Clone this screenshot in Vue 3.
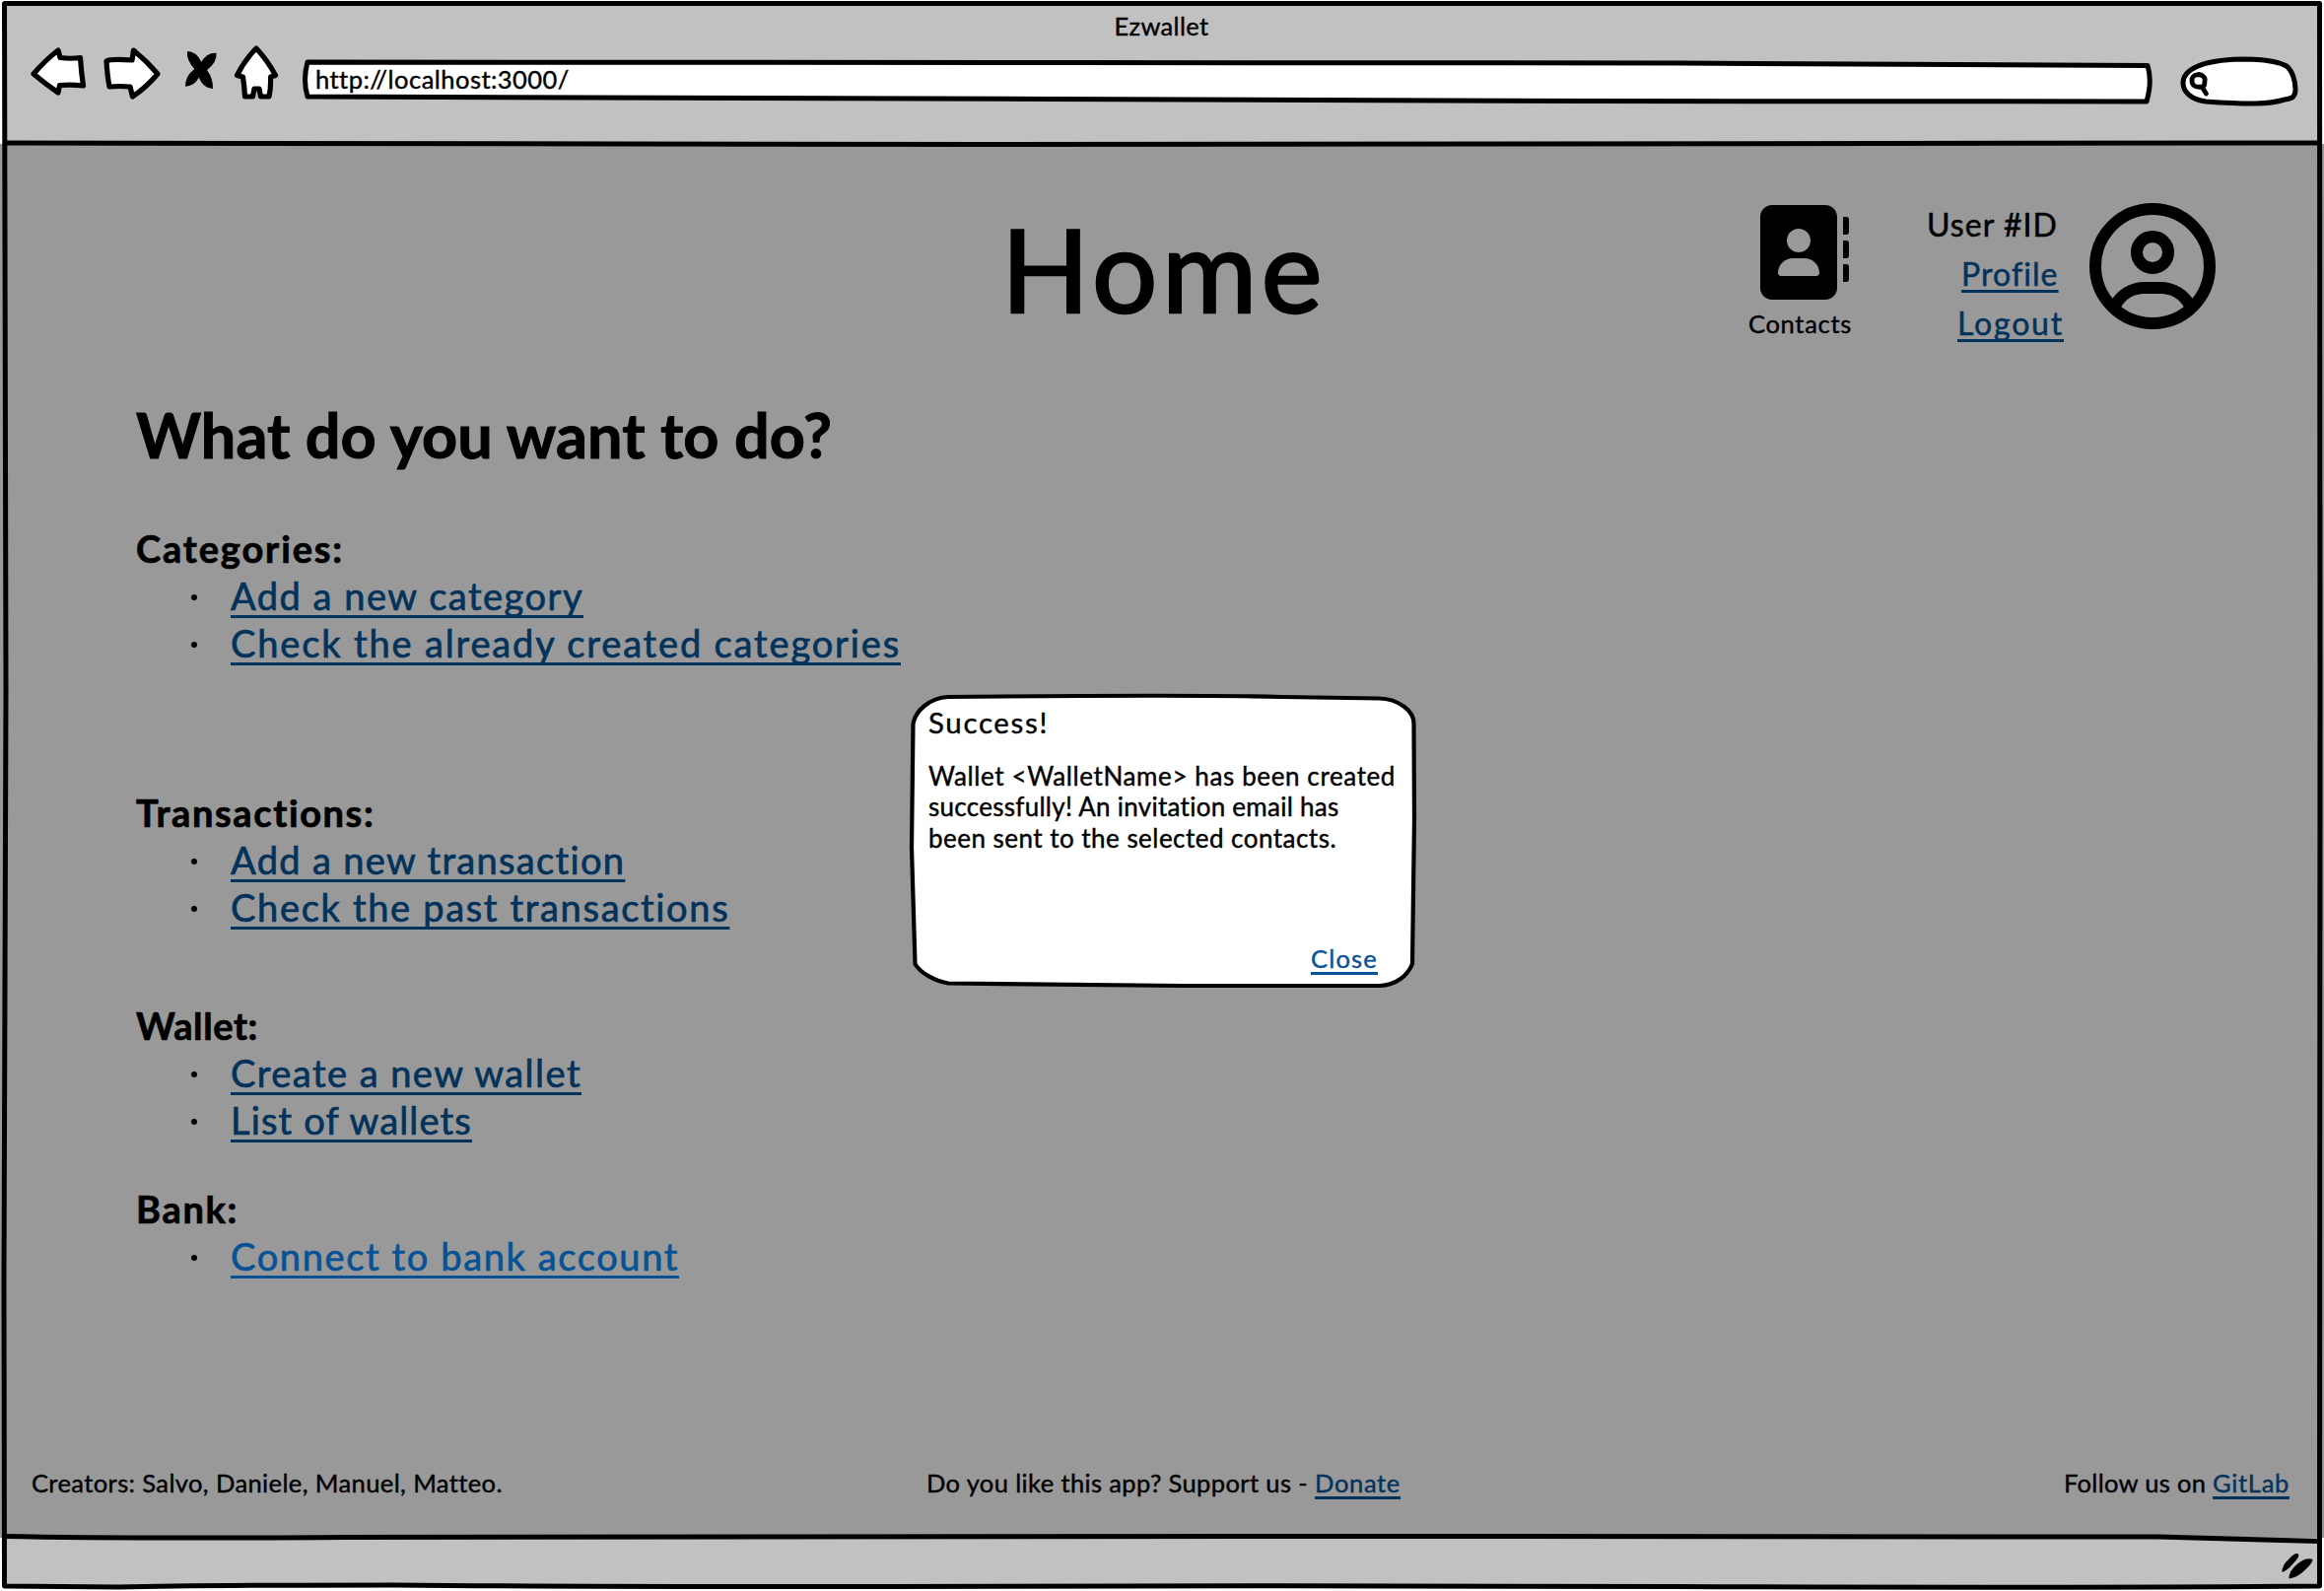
<script setup>
const groups = [
  {
    title: 'Categories:', width: 211, kind: 'categories',
    links: [
      { text: 'Add a new category', width: 358 },
      { text: 'Check the already created categories', width: 680 },
    ],
  },
  {
    title: 'Transactions:', width: 243, kind: 'transactions',
    links: [
      { text: 'Add a new transaction', width: 401 },
      { text: 'Check the past transactions', width: 507 },
    ],
  },
  {
    title: 'Wallet:', width: 124, kind: 'wallet',
    links: [
      { text: 'Create a new wallet', width: 356 },
      { text: 'List of wallets', width: 245 },
    ],
  },
  {
    title: 'Bank:', width: 104, kind: 'bank',
    links: [{ text: 'Connect to bank account', width: 455 }],
  },
]

// Tracks a single line of text so that it fills the given width.
const vFit = {
  mounted(el, { value }) {
    const natural = el.getBoundingClientRect().width
    el.style.letterSpacing = `${(value - natural) / el.textContent.length}px`
  },
}
</script>

<template>
  <div class="window">
    <header class="toolbar">
      <div class="window-title"><span v-fit="96">Ezwallet</span></div>
      <div class="controls">
        <svg class="nav" viewBox="0 0 310 60" width="310" height="60">
          <g fill="#fff" stroke="#000" stroke-width="5.2" stroke-linejoin="round">
            <path d="M34 31 Q46 17 59 7 L61 14.5 Q72 16 81.500 14.500 Q82.500 30 84.500 43 Q72 41.500 60.500 42.500 L59 50 Q46 41 34 31Z" />
            <path d="M108 18 Q112 15.500 134 17 L135.500 7 Q149 18 160 31 Q148 45 134.500 54 L132 44 Q121 43 111 44 Q109 34 108 18Z" />
            <path d="M260 5 Q272 18 279.500 32.500 L274.500 34 Q275 45 273 54 L264.500 54 L263 46 L258 46 L256.500 54 L248.500 54 Q248 44 246.500 34 L240.500 32.500 Q248 17 260 5Z" />
          </g>
          <path d="M190 8 Q199 8 204.300 18.700 Q210 9 219.500 9.700 Q220.500 19 210 27 Q216.500 36 216 46 Q207 46 201.700 34.700 Q197 43.500 188 43.700 Q188 33 197.300 26 Q189 17 190 8Z" />
        </svg>
        <div class="address">
          <svg class="outline" viewBox="0 0 1880 48" width="1880" height="48">
            <path d="M6 5 L780 5.500 L1400 6 L1873 8.500 Q1878 24 1872 45 L1300 44.500 L760 42.500 L6 40 Q1 23 6 5Z" fill="#fff" stroke="#000" stroke-width="5" stroke-linejoin="round" />
          </svg>
          <span class="url" v-fit="257">http://localhost:3000/</span>
        </div>
        <svg class="search" viewBox="0 0 122 54" width="122" height="54">
          <path d="M5 29 C5 16 23 6 64 5 C84 5 101 7 110 12 C116 17 119 27 119 36 C119 43 116 45 108 46 C92 51 72 51 28 48 C14 46 5 39 5 29Z" fill="#fff" stroke="#000" stroke-width="5" />
          <path d="M14 27 C14 20 19 21.500 21 20.500 C25 21 28 24 27 27 C27 31 26 33 25 33 C18 34 14 32 14 27Z M24 33 L28.500 40" fill="none" stroke="#000" stroke-width="4.800" stroke-linecap="round" />
        </svg>
      </div>
    </header>

    <main class="page">
      <div class="page-head">
        <h1><span v-fit="330">Home</span></h1>
        <div class="contacts">
          <svg viewBox="0 0 512 512" width="96" height="96">
            <path fill-rule="evenodd" d="M96 0C60.700 0 32 28.700 32 64V448c0 35.300 28.700 64 64 64H384c35.300 0 64-28.700 64-64V64c0-35.300-28.700-64-64-64H96zM208 288h64c44.200 0 80 35.800 80 80c0 8.800-7.200 16-16 16H144c-8.800 0-16-7.200-16-16c0-44.200 35.800-80 80-80zM176 192a64 64 0 1 1 128 0a64 64 0 1 1-128 0z" />
            <path d="M480 64h16a16 16 0 0 1 16 16v64a16 16 0 0 1-16 16h-16zM480 192h16a16 16 0 0 1 16 16v64a16 16 0 0 1-16 16h-16zM480 320h16a16 16 0 0 1 16 16v64a16 16 0 0 1-16 16h-16z" />
          </svg>
          <span v-fit="105">Contacts</span>
        </div>
        <div class="account">
          <div class="user-id"><span v-fit="133">User #ID</span></div>
          <div class="profile"><a v-fit="98">Profile</a></div>
          <div class="logout"><a v-fit="108">Logout</a></div>
        </div>
        <svg class="avatar" viewBox="0 0 128 128" width="128" height="128" fill="none" stroke="#000" stroke-width="12">
          <circle cx="64" cy="64" r="58" />
          <circle cx="64" cy="50" r="16" />
          <path d="M26 104 C32 93 43 86 56 86 H72 C85 86 96 93 102 104" />
        </svg>
      </div>

      <h2><span v-fit="706">What do you want to do?</span></h2>

      <section v-for="g in groups" :key="g.kind" :class="['group', g.kind]">
        <h3><span v-fit="g.width">{{ g.title }}</span></h3>
        <ul>
          <li v-for="l in g.links" :key="l.text"><a v-fit="l.width">{{ l.text }}</a></li>
        </ul>
      </section>

      <footer class="credits">
        <div class="creators"><span v-fit="477">Creators: Salvo, Daniele, Manuel, Matteo.</span></div>
        <div class="support"><span v-fit="394">Do you like this app? Support us -&nbsp;</span><a v-fit="87">Donate</a></div>
        <div class="follow"><span v-fit="151">Follow us on&nbsp;</span><a v-fit="78">GitLab</a></div>
      </footer>
    </main>

    <div class="statusbar">
      <svg viewBox="0 0 36 28" width="36" height="28">
        <path d="M2.500 21 Q2 14 10 7 Q16 0.500 19 2.500 Q21 5 13 13 Q8 19 2.500 21ZM9.500 27.500 Q9 20 18 12.500 Q27 5.500 33.500 8 Q34 11 26 18.500 Q18 26.500 9.500 27.500Z" />
      </svg>
    </div>

    <svg class="frame" viewBox="0 0 2358 1614" width="2358" height="1614" fill="none" stroke="#000" stroke-width="5" stroke-linejoin="round">
      <path d="M4.500 3.500 L2353.500 3.500 L2354 700 L2353.500 1609 Q2100 1611 1700 1609.500 T900 1609.500 Q600 1610 400 1608 Q200 1608 120 1610 L4.500 1609 L4 1300 L6 700 Z" />
      <path d="M5 145 Q200 147 1000 146.500 T2353 145" />
      <path d="M5 1558.500 Q120 1561 350 1559.500 T1400 1558.500 L2190 1559 L2353 1563.500" />
    </svg>

    <div class="dialog" role="dialog">
      <svg class="outline" viewBox="0 0 520 304" width="520" height="304">
        <path d="M42 7 Q290 4.500 380 7 L479 8.500 C499 9 514.500 21 514.500 34 L515 130 L513 278 C508 290 496 299.500 480 300 L280 300 L42 297.500 C28 295 14 287 8.500 278 L5 160 L6.500 34 C9 21 23 8 42 7Z" fill="#fff" stroke="#000" stroke-width="4.200" stroke-linejoin="round" />
      </svg>
      <div class="dialog-body">
        <div class="dialog-title"><span v-fit="122">Success!</span></div>
        <p>
          <span v-fit="474">Wallet &lt;WalletName&gt; has been created</span><br>
          <span v-fit="417">successfully! An invitation email has</span><br>
          <span v-fit="414">been sent to the selected contacts.</span>
        </p>
        <div class="dialog-actions"><a v-fit="68">Close</a></div>
      </div>
    </div>
  </div>
</template>

<style>
body { margin: 0; background: #fff; }
</style>

<style scoped>
.window {
  position: relative;
  width: 2358px;
  height: 1614px;
  overflow: hidden;
  display: flex;
  flex-direction: column;
  font-family: Lato, "Open Sans", sans-serif;
  font-size: 25.5px;
  line-height: 32px;
  color: #000;
  white-space: nowrap;
  -webkit-text-stroke: 0.4px currentColor;
}
svg { display: block; flex: none; }
h1, h2, h3, p, ul { margin: 0; padding: 0; }
a {
  color: #03325b;
  text-decoration: underline;
  text-decoration-thickness: 2.5px;
  text-underline-offset: 4px;
  text-decoration-skip-ink: none;
}

.toolbar {
  height: 142px;
  margin: 4px 5px 0 4px;
  background: #c1c1c1;
}
.window-title {
  height: 32px;
  padding-top: 6px;
  text-align: center;
}
.controls { display: flex; margin: 2px 0 0 -4px; height: 70px; }
.address { position: relative; width: 1880px; height: 48px; margin: 14px 0 0 -4px; }
.outline { position: absolute; left: 0; top: 0; }
.url { position: relative; margin-left: 14px; line-height: 45px; }
.search { margin: 11px 0 0 24px; }

.page {
  height: 1414px;
  background: #999;
  display: flex;
  flex-direction: column;
}
.page-head { display: flex; height: 244px; }
h1 {
  width: 330px;
  margin-left: 1016px;
  font-size: 117px;
  line-height: 140px;
  font-weight: 400;
  padding-top: 56px;
  -webkit-text-stroke-width: 2.5px;
}
.contacts {
  margin: 62px 0 0 428px;
  width: 110px;
}
.contacts svg { margin: 0 0 8px 6px; }
.account {
  width: 143px;
  margin: 57px 0 0 70px;
  font-size: 32px;
  line-height: 50px;
  -webkit-text-stroke-width: 0.5px;
}
.user-id { padding-left: 1px; }
.profile { padding-left: 36px; }
.logout { padding-left: 32px; }
.avatar { margin: 60px 0 0 23px; }

h2 {
  margin: 11px 0 0 138px;
  font-size: 63px;
  line-height: 80px;
  font-weight: 700;
  height: 82px;
  -webkit-text-stroke-width: 1px;
}
.group {
  margin-left: 138px;
  font-size: 38px;
  line-height: 48px;
  -webkit-text-stroke-width: 0.7px;
}
h3 { font-size: 38px; font-weight: 700; }
.categories { margin-top: 49px; }
.transactions { margin-top: 124px; }
.wallet { margin-top: 72px; }
.bank { margin-top: 42px; }
.bank a { color: #075294; }
ul { list-style: none; }
li { display: flex; align-items: center; height: 48px; }
li::before {
  content: "";
  width: 6px;
  height: 6px;
  margin: 4px 34px 0 56px;
  border-radius: 50%;
  background: #000;
}
li a { text-underline-offset: 5px; text-decoration-thickness: 3px; }

.credits {
  display: flex;
  margin-top: auto;
  height: 72px;
}
.creators { margin-left: 32px; width: 477px; }
.support { margin-left: 431px; width: 481px; }
.follow { margin-left: 673px; }

.statusbar {
  height: 49px;
  margin: 0 5px 0 4px;
  background: #c1c1c1;
  display: flex;
  justify-content: flex-end;
}
.statusbar svg { margin: 14px 4px 0 0; }

.frame { position: absolute; left: 0; top: 0; pointer-events: none; }

.dialog {
  position: absolute;
  left: 920px;
  top: 700px;
  width: 520px;
  height: 304px;
}
.dialog-body { position: relative; padding: 16px 0 0 22px; }
.dialog-title { font-size: 29.5px; line-height: 34px; height: 34px; }
.dialog p { font-size: 26px; line-height: 31.35px; padding-top: 22px; }
.dialog-actions { text-align: right; padding: 90px 42px 0 0; }
.dialog-actions a { color: #08529a; }
</style>
